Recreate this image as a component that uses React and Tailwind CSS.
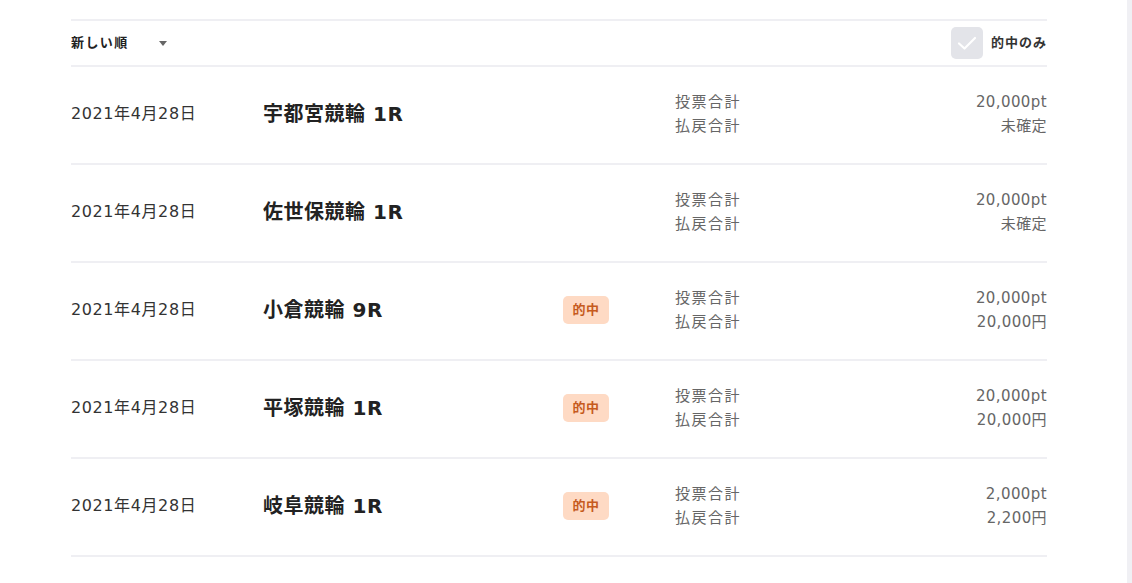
import React from "react";

const rows = [
  { name: "宇都宮競輪 1R", hit: false, bet: "20,000pt", pay: "未確定" },
  { name: "佐世保競輪 1R", hit: false, bet: "20,000pt", pay: "未確定" },
  { name: "小倉競輪 9R", hit: true, bet: "20,000pt", pay: "20,000円" },
  { name: "平塚競輪 1R", hit: true, bet: "20,000pt", pay: "20,000円" },
  { name: "岐阜競輪 1R", hit: true, bet: "2,000pt", pay: "2,200円" },
];

export default function App() {
  return (
    <div
      className="flex w-[1132px] h-[583px] bg-white overflow-hidden"
      style={{ fontFamily: '"DejaVu Sans", "Noto Sans CJK JP", sans-serif' }}
    >
      <div className="flex-1 pl-[71px] pt-[19px]">
        <div className="w-[976px]">
          <div className="h-[48px] border-y-2 border-[#efeff3] flex items-center justify-between">
            <div className="flex items-center">
              <span className="text-[13px] font-bold text-[#222] tracking-[1.4px]">新しい順</span>
              <span className="ml-[30px] mt-[1px] w-0 h-0 border-l-[4px] border-r-[4px] border-t-[5px] border-l-transparent border-r-transparent border-t-[#666]" />
            </div>
            <div className="flex items-center">
              <div className="w-[32px] h-[32px] rounded-[5px] bg-[#e3e4e9] flex items-center justify-center">
                <svg width="20" height="16" viewBox="0 0 20 16" fill="none">
                  <path d="M2 8.5 L7.5 13.5 L18 3" stroke="#fff" strokeWidth="2.2" strokeLinecap="round" strokeLinejoin="round" />
                </svg>
              </div>
              <span className="ml-[8px] text-[13px] font-bold text-[#333] tracking-[1px]">的中のみ</span>
            </div>
          </div>
          {rows.map((r, i) => (
            <div key={i} className="h-[98px] border-b-2 border-[#efeff3] flex items-center">
              <div className="w-[192px] text-[16px] text-[#333] tracking-[0.6px] -mt-[3px]">2021年4月28日</div>
              <div className="w-[300px] text-[20px] font-bold text-[#222] tracking-[0.5px] -mt-[3px]">{r.name}</div>
              <div className="w-[112px] -mt-[3px]">
                {r.hit && (
                  <span className="inline-flex items-center justify-center w-[46px] h-[28px] rounded-[5px] bg-[#fedac4] text-[13px] font-bold text-[#c65a1e] tracking-[0.5px]">
                    的中
                  </span>
                )}
              </div>
              <div className="flex-1 text-[15px] leading-[24px] text-[#666] tracking-[1.5px] -mt-[3px]">
                <div>投票合計</div>
                <div>払戻合計</div>
              </div>
              <div className="text-right text-[15px] leading-[24px] text-[#666] tracking-[0.4px] -mt-[3px]">
                <div>{r.bet}</div>
                <div>{r.pay}</div>
              </div>
            </div>
          ))}
        </div>
      </div>
      <div className="w-[5px] h-full bg-[#f0f0f4]" />
    </div>
  );
}
